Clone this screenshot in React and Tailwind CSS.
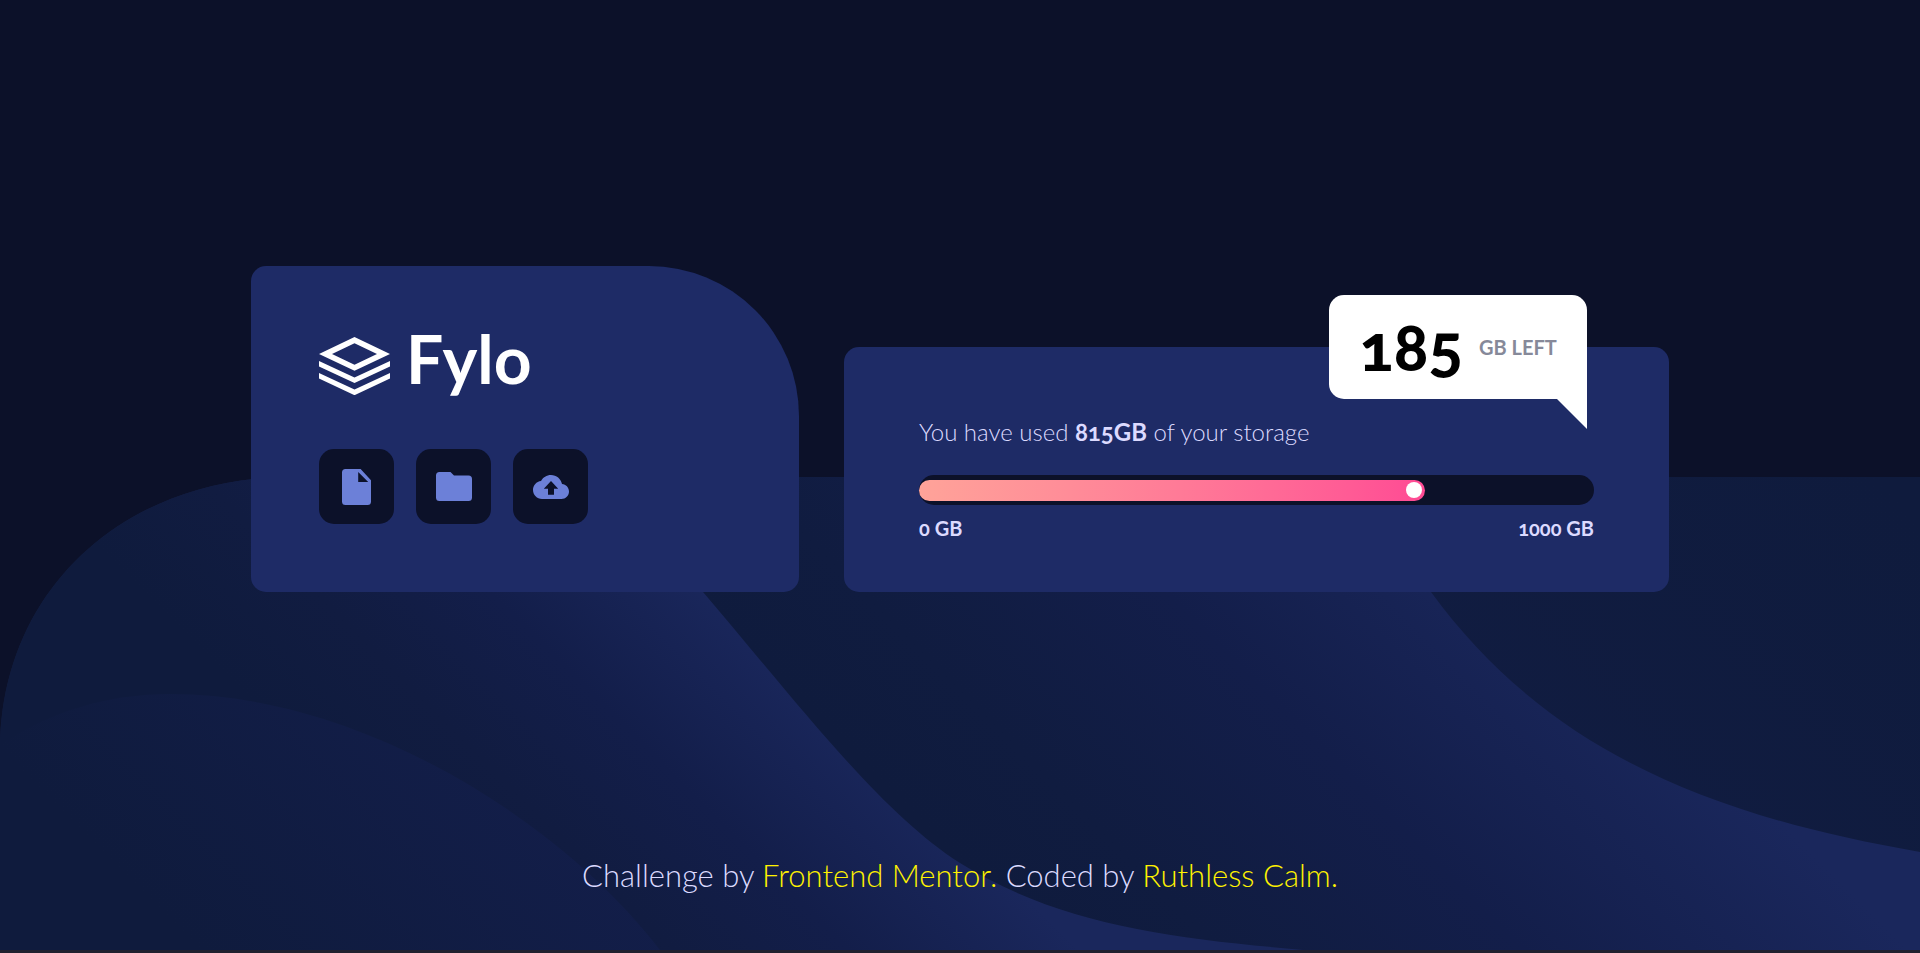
function Logo() {
  return (
    <div className="flex h-[58px] items-start gap-4 text-white">
      <svg className="h-[58px] w-[71px]" viewBox="0 0 71 58" fill="currentColor" aria-hidden="true">
        <path fillRule="evenodd" d="M35.5 0 71 17 35.5 33.8 0 17ZM35.5 6.3 13 17l22.500 10.700L58 17Z" />
        <path d="M0 24 35.500 40.500 71 24v5.600L35.500 46 0 29.600Z" />
        <path d="M0 36 35.500 52.400 71 36v5.600L35.500 58.200 0 41.600Z" />
      </svg>
      <span className="text-[66px] leading-[44px] font-bold">Fylo</span>
    </div>
  );
}

function FileIcon() {
  return (
    <svg className="h-9 w-[29px]" viewBox="0 0 29 36" fill="currentColor" aria-hidden="true">
      <path fillRule="evenodd" d="M3.500 0H18.600L29 11.200V32.500A3.500 3.500 0 0 1 25.500 36H3.500A3.500 3.500 0 0 1 0 32.500V3.500A3.500 3.500 0 0 1 3.500 0ZM16.200 2.900V13H26.200Z" />
    </svg>
  );
}

function FolderIcon() {
  return (
    <svg className="h-[29px] w-9" viewBox="0 0 36 29" fill="currentColor" aria-hidden="true">
      <path d="M3.500 0H14.500L18 3.500H32.500A3.500 3.500 0 0 1 36 7V25.500A3.500 3.500 0 0 1 32.500 29H3.500A3.500 3.500 0 0 1 0 25.500V3.500A3.500 3.500 0 0 1 3.500 0Z" />
    </svg>
  );
}

function UploadIcon() {
  return (
    <svg className="h-6 w-9" viewBox="0 4 24 16" fill="currentColor" aria-hidden="true">
      <path d="M19.350 10.040C18.670 6.590 15.640 4 12 4 9.110 4 6.600 5.640 5.350 8.040 2.340 8.360 0 10.910 0 14c0 3.310 2.690 6 6 6h13c2.760 0 5-2.240 5-5 0-2.640-2.050-4.780-4.650-4.960zM14 13.200v4h-4v-4H7.200L12 8l4.800 5.200H14z" />
    </svg>
  );
}

function IconButton({ label, children }) {
  return (
    <button
      type="button"
      aria-label={label}
      className="flex size-[75px] items-center justify-center rounded-[15px] bg-[#0c1129] text-[#6c80d8]"
    >
      {children}
    </button>
  );
}

function Waves() {
  return (
    <svg className="absolute inset-x-0 bottom-0 w-full" viewBox="0 477 1920 473" aria-hidden="true">
      <defs>
        <linearGradient id="base" gradientUnits="userSpaceOnUse" x1="700" y1="500" x2="1300" y2="-100">
          <stop offset="0" stopColor="#121d44" />
          <stop offset="1" stopColor="#0f1b3d" />
        </linearGradient>
        <linearGradient id="middle" gradientUnits="userSpaceOnUse" x1="900" y1="800" x2="1330" y2="370">
          <stop offset="0" stopColor="#0f1b3d" />
          <stop offset="0.2" stopColor="#101c40" />
          <stop offset="0.55" stopColor="#131e4a" />
          <stop offset="1" stopColor="#1a275c" />
        </linearGradient>
        <linearGradient id="left" gradientUnits="userSpaceOnUse" x1="200" y1="650" x2="490" y2="360">
          <stop offset="0" stopColor="#0f1b3d" />
          <stop offset="0.3" stopColor="#111c41" />
          <stop offset="0.6" stopColor="#131e4a" />
          <stop offset="1" stopColor="#1a275c" />
        </linearGradient>
        <linearGradient id="hill" gradientUnits="userSpaceOnUse" x1="100" y1="850" x2="360" y2="590">
          <stop offset="0" stopColor="#0f1b3d" />
          <stop offset="1" stopColor="#131e4a" />
        </linearGradient>
      </defs>
      <path fill="url(#base)" d="M290 477H1920V950H0V750C0 590 125 477 290 477Z" />
      <path
        fill="url(#middle)"
        d="M290 477H1340C1375 510 1400 552 1431 592C1545 748 1705 815 1920 852V950H290Z"
      />
      <path
        fill="url(#left)"
        d="M290 477C500 477 620 495 703 592C800 706 880 812 960 863C1060 925 1170 938 1303 950H0V750C0 590 125 477 290 477Z"
      />
      <path fill="url(#hill)" d="M0 745C50 712 105 694 171 694C360 694 560 820 660 950H0Z" />
    </svg>
  );
}

function BrandCard() {
  return (
    <section className="flex w-[548px] max-w-full flex-col gap-[54px] rounded-[15px] rounded-tr-[150px] bg-[#1e2b66] px-[68px] pt-[71px] pb-[68px]">
      <h1 className="flex">
        <Logo />
      </h1>
      <div className="flex gap-[22px]">
        <IconButton label="Files">
          <FileIcon />
        </IconButton>
        <IconButton label="Folders">
          <FolderIcon />
        </IconButton>
        <IconButton label="Upload">
          <UploadIcon />
        </IconButton>
      </div>
    </section>
  );
}

function StorageCard() {
  const used = 75;
  return (
    <section className="relative w-[825px] max-w-full rounded-[15px] bg-[#1e2b66] px-[75px] pt-[70px] pb-[50px] text-[#dcdaff]">
      <div className="absolute -top-[52px] right-[82px] flex h-[104px] w-[258px] items-center justify-center gap-4 rounded-[15px] rounded-br-none bg-white">
        <span className="text-[64px] leading-[60px] font-black text-black oldstyle-nums">185</span>
        <span className="text-[20px] font-bold whitespace-nowrap text-[#868999]">GB LEFT</span>
        <svg className="absolute top-full right-0 size-[30px]" viewBox="0 0 30 30" aria-hidden="true">
          <path fill="#fff" d="M0 0H30V30Z" />
        </svg>
      </div>
      <p className="text-[24px] leading-[30px] font-light oldstyle-nums">
        You have used <strong className="font-bold">815GB</strong> of your storage
      </p>
      <div
        role="progressbar"
        aria-label="Storage used"
        aria-valuemin={0}
        aria-valuemax={1000}
        aria-valuenow={815}
        className="mt-[28px] flex h-[30px] items-center rounded-full bg-[#0c1129]"
      >
        <div
          className="flex h-[21px] items-center justify-end rounded-full bg-linear-to-r from-[#ffa399] to-[#ff4a94] pr-[3px]"
          style={{ width: `${used}%` }}
        >
          <span className="size-4 rounded-full bg-white" />
        </div>
      </div>
      <div className="mt-[10px] flex justify-between text-[20px] leading-[27px] font-bold oldstyle-nums">
        <span>0 GB</span>
        <span>1000 GB</span>
      </div>
    </section>
  );
}

export default function App() {
  return (
    <div className="relative isolate flex min-h-screen flex-col bg-[#0c1129] font-['Lato',sans-serif]">
      <div className="absolute inset-0 -z-10 overflow-hidden border-b-[3px] border-[#20212f]">
        <Waves />
      </div>
      <main className="flex flex-1 flex-wrap items-end content-center justify-center gap-[45px]">
        <BrandCard />
        <StorageCard />
      </main>
      <footer className="pb-[61px] text-center text-[31px] leading-[34px] font-light text-[#dcdaff]">
        Challenge by{" "}
        <a href="#frontend-mentor" className="text-[#fff200]">
          Frontend Mentor.
        </a>{" "}
        Coded by{" "}
        <a href="#ruthless-calm" className="text-[#fff200]">
          Ruthless Calm.
        </a>
      </footer>
    </div>
  );
}
